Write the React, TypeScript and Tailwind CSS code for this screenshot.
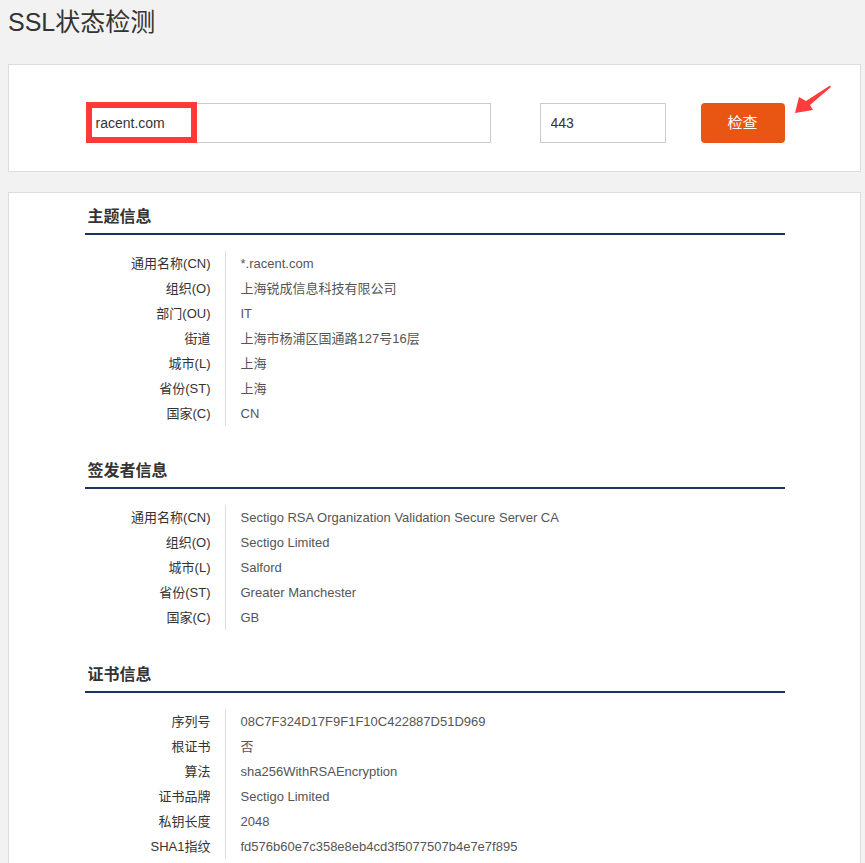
import React from "react";

type Row = [string, string];

const subject: Row[] = [
  ["通用名称(CN)", "*.racent.com"],
  ["组织(O)", "上海锐成信息科技有限公司"],
  ["部门(OU)", "IT"],
  ["街道", "上海市杨浦区国通路127号16层"],
  ["城市(L)", "上海"],
  ["省份(ST)", "上海"],
  ["国家(C)", "CN"],
];

const issuer: Row[] = [
  ["通用名称(CN)", "Sectigo RSA Organization Validation Secure Server CA"],
  ["组织(O)", "Sectigo Limited"],
  ["城市(L)", "Salford"],
  ["省份(ST)", "Greater Manchester"],
  ["国家(C)", "GB"],
];

const cert: Row[] = [
  ["序列号", "08C7F324D17F9F1F10C422887D51D969"],
  ["根证书", "否"],
  ["算法", "sha256WithRSAEncryption"],
  ["证书品牌", "Sectigo Limited"],
  ["私钥长度", "2048"],
  ["SHA1指纹", "fd576b60e7c358e8eb4cd3f5077507b4e7e7f895"],
];

function Section({ title, rows, first }: { title: string; rows: Row[]; first?: boolean }) {
  return (
    <div className={first ? "" : "mt-[33px]"}>
      <div className="text-[16px] leading-6 font-bold text-[#333] pl-[3px] pb-1 border-b-2 border-[#1e3262]">
        {title}
      </div>
      <div className="mt-[16px]">
        {rows.map(([k, v]) => (
          <div key={k} className="flex h-[25px] items-center text-[13px]">
            <div className="w-[141px] h-full flex items-center justify-end pr-[14px] border-r border-[#dddddd] text-[#333]">
              {k}
            </div>
            <div className="pl-[15px] text-[#555]">{v}</div>
          </div>
        ))}
      </div>
    </div>
  );
}

export default function App() {
  return (
    <div
      className="relative h-[863px] overflow-hidden bg-[#f2f2f2]"
      style={{ fontFamily: '"Liberation Sans", Arial, "Noto Sans CJK SC", sans-serif' }}
    >
      <h1 className="pl-2 pt-[6px] text-[25px] leading-8 font-normal text-[#333]">SSL状态检测</h1>

      {/* search card */}
      <div className="ml-2 mr-1 mt-[26px] bg-white border border-[#dddddd] pt-[38px] pb-[28px]">
        <div className="w-[700px] mx-auto flex items-center">
          <div className="relative ml-px">
            <input
              readOnly
              value="racent.com"
              className="w-[405px] h-10 border border-[#cccccc] pl-[9px] text-[14px] text-[#333] outline-none"
            />
            <div className="absolute left-0 top-[-1px] w-[111px] h-[41px] border-[6px] border-[#ff3838] pointer-events-none" />
          </div>
          <input
            readOnly
            value="443"
            className="ml-[49px] w-[126px] h-10 border border-[#cccccc] pl-[10px] text-[14px] text-[#333] outline-none"
          />
          <button className="ml-[35px] w-[84px] h-10 rounded bg-[#e95513] text-white text-[15px]">检查</button>
        </div>
      </div>

      {/* result card */}
      <div className="ml-2 mr-1 mt-5 bg-white border border-[#dddddd] pt-3 pb-10">
        <div className="w-[700px] mx-auto">
          <Section title="主题信息" rows={subject} first />
          <Section title="签发者信息" rows={issuer} />
          <Section title="证书信息" rows={cert} />
        </div>
      </div>

      {/* annotation arrow */}
      <svg className="absolute left-[790px] top-[80px]" width="45" height="40" viewBox="0 0 45 40">
        <polygon points="5,33 9,17 16,21 40,5.5 41,7 20,25 23,30" fill="#ff3b3b" />
      </svg>
    </div>
  );
}
